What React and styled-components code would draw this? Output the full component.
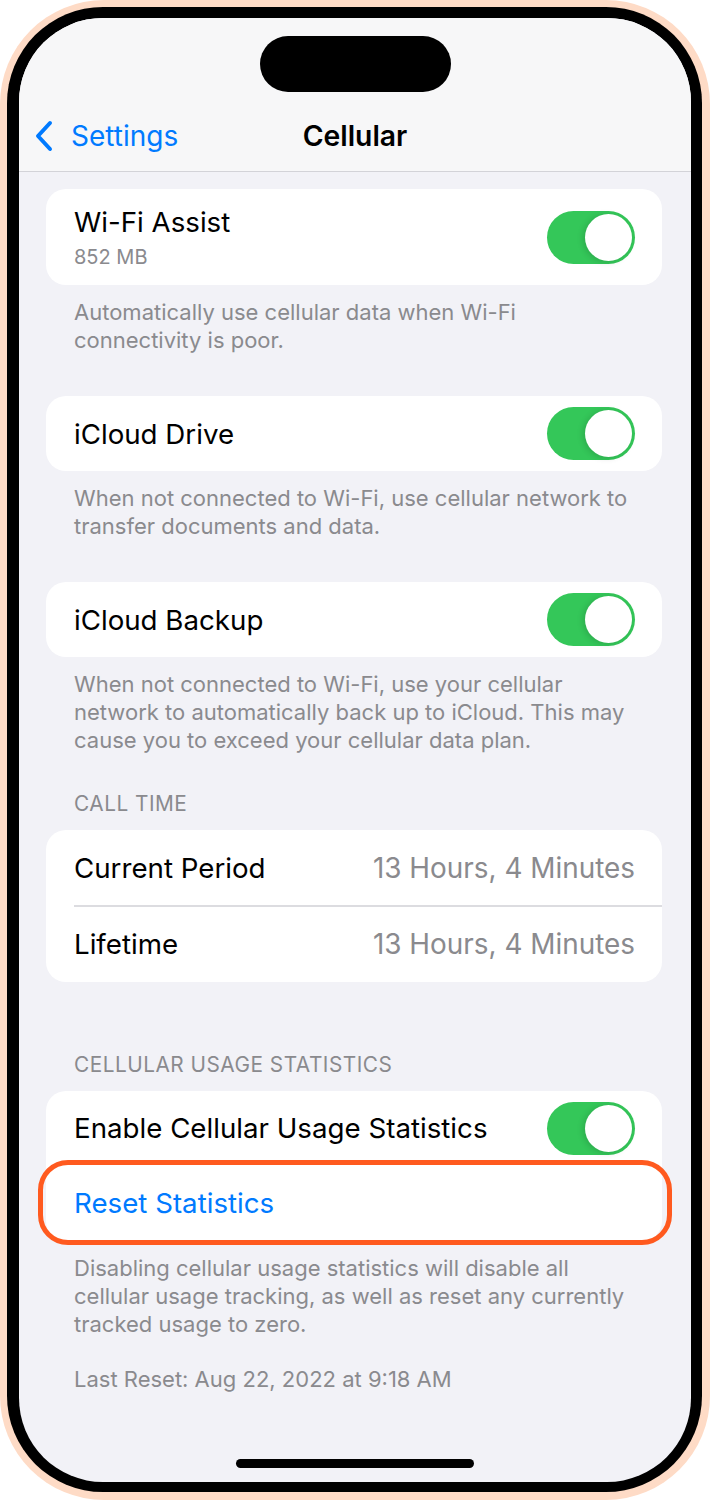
import React from "react";
import styled, { createGlobalStyle } from "styled-components";

const GlobalStyle = createGlobalStyle`
  html, body {
    margin: 0;
    padding: 0;
    background: #ffffff;
  }
  body {
    font-family: Inter, "Noto Sans", "Liberation Sans", sans-serif;
    -webkit-font-smoothing: antialiased;
  }
`;

const Toggle = ({ on = true }) => (
  <Track $on={on}>
    <Knob />
  </Track>
);

/* Cellular settings screen inside a phone frame */
const App = () => {
  return (
    <>
      <GlobalStyle />
      <Phone>
        <Bezel>
          <Screen>
            <NavBar>
              <Island />
              <NavRow>
                <BackButton>
                  <svg width="20" height="32" viewBox="0 0 20 32" fill="none">
                    <path
                      d="M16 3 L4 16 L16 29"
                      stroke="#007AFF"
                      strokeWidth="4"
                      strokeLinecap="round"
                      strokeLinejoin="round"
                    />
                  </svg>
                  <span>Settings</span>
                </BackButton>
                <NavTitle>Cellular</NavTitle>
              </NavRow>
            </NavBar>

            <Content>
              <Card>
                <Row $tall>
                  <RowText>
                    <Label>Wi-Fi Assist</Label>
                    <SubLabel>852 MB</SubLabel>
                  </RowText>
                  <Toggle />
                </Row>
              </Card>
              <Footer>
                Automatically use cellular data when Wi-Fi
                <br />
                connectivity is poor.
              </Footer>

              <Card>
                <Row>
                  <Label>iCloud Drive</Label>
                  <Toggle />
                </Row>
              </Card>
              <Footer>
                When not connected to Wi-Fi, use cellular network to
                <br />
                transfer documents and data.
              </Footer>

              <Card>
                <Row>
                  <Label>iCloud Backup</Label>
                  <Toggle />
                </Row>
              </Card>
              <Footer>
                When not connected to Wi-Fi, use your cellular
                <br />
                network to automatically back up to iCloud. This may
                <br />
                cause you to exceed your cellular data plan.
              </Footer>

              <Header>CALL TIME</Header>
              <Card>
                <Row>
                  <Label>Current Period</Label>
                  <Value>13 Hours, 4 Minutes</Value>
                </Row>
                <Separator />
                <Row>
                  <Label>Lifetime</Label>
                  <Value>13 Hours, 4 Minutes</Value>
                </Row>
              </Card>

              <Header $spaced>CELLULAR USAGE STATISTICS</Header>
              <Card>
                <Row>
                  <Label>Enable Cellular Usage Statistics</Label>
                  <Toggle />
                </Row>
                <Row>
                  <Label $link>Reset Statistics</Label>
                  <Highlight />
                </Row>
              </Card>
              <Footer>
                Disabling cellular usage statistics will disable all
                <br />
                cellular usage tracking, as well as reset any currently
                <br />
                tracked usage to zero.
              </Footer>

              <LastReset>Last Reset: Aug 22, 2022 at 9:18 AM</LastReset>
            </Content>

            <HomeIndicator />
          </Screen>
        </Bezel>
      </Phone>
    </>
  );
};

export default App;

// #region Phone stylings
const Phone = styled.div`
  width: 710px;
  height: 1500px;
  box-sizing: border-box;
  padding: 7px 8px 8px 7px;
  background: #fedbc6;
  border-radius: 104px;
  display: flex;
`;

const Bezel = styled.div`
  flex: 1;
  display: flex;
  background: #000;
  border-radius: 96px;
  padding: 11px 11px 10px 12px;
`;

const Screen = styled.div`
  flex: 1;
  display: flex;
  flex-direction: column;
  background: #f2f2f7;
  border-radius: 84px;
  overflow: hidden;
`;

const NavBar = styled.div`
  height: 154px;
  box-sizing: border-box;
  background: #f7f7f8;
  border-bottom: 1.5px solid #d3d3d8;
  display: flex;
  flex-direction: column;
  align-items: center;
  padding-top: 18px;
`;

const Island = styled.div`
  width: 191px;
  height: 56px;
  border-radius: 28px;
  background: #000;
`;

const NavRow = styled.div`
  position: relative;
  width: 100%;
  height: 48px;
  margin-top: 20px;
  display: flex;
  align-items: center;
  justify-content: center;
`;

const BackButton = styled.div`
  position: absolute;
  left: 15px;
  top: 0;
  height: 100%;
  display: flex;
  align-items: center;
  gap: 17px;
  color: #007aff;
  font-size: 28px;
`;

const NavTitle = styled.div`
  font-size: 28.3px;
  font-weight: 600;
  color: #000;
`;
// #endregion

// #region List stylings
const Content = styled.div`
  display: flex;
  flex-direction: column;
  padding: 17px 29px 0 27px;
`;

const Card = styled.div`
  position: relative;
  background: #fff;
  border-radius: 20px;
  display: flex;
  flex-direction: column;
`;

const Row = styled.div`
  position: relative;
  height: ${(p) => (p.$tall ? "96px" : "75px")};
  box-sizing: border-box;
  padding: 0 27px 0 28px;
  display: flex;
  align-items: center;
  justify-content: space-between;
`;

const RowText = styled.div`
  display: flex;
  flex-direction: column;
  gap: 6px;
`;

const Label = styled.div`
  font-size: 27.7px;
  color: ${(p) => (p.$link ? "#007aff" : "#000")};
`;

const SubLabel = styled.div`
  font-size: 20px;
  color: #8a8a8e;
`;

const Value = styled.div`
  font-size: 27.9px;
  color: #8a8a8e;
`;

const Separator = styled.div`
  height: 1.5px;
  margin-left: 28px;
  background: #dcdce0;
`;

const Footer = styled.div`
  padding: 13px 28px 0 28px;
  margin-bottom: 42px;
  font-size: 22px;
  line-height: 28px;
  color: #8a8a8e;
`;

const Header = styled.div`
  padding: 0 28px;
  margin-top: ${(p) => (p.$spaced ? "69px" : "-6px")};
  margin-bottom: 12px;
  font-size: 20.8px;
  letter-spacing: 0.5px;
  line-height: 28px;
  color: #8a8a8e;
`;

const LastReset = styled.div`
  padding: 0 28px;
  margin-top: -15px;
  font-size: 22px;
  line-height: 28px;
  color: #8a8a8e;
`;

const Track = styled.div`
  width: 88px;
  height: 53px;
  border-radius: 27px;
  box-sizing: border-box;
  padding: 3px;
  background: ${(p) => (p.$on ? "#34c759" : "#e9e9ea")};
  display: flex;
  justify-content: ${(p) => (p.$on ? "flex-end" : "flex-start")};
`;

const Knob = styled.div`
  width: 47px;
  height: 47px;
  border-radius: 50%;
  background: #fff;
  box-shadow: -2px 1px 6px rgba(0, 0, 0, 0.15);
`;

const Highlight = styled.div`
  position: absolute;
  left: -8px;
  right: -10px;
  top: -6px;
  bottom: -4px;
  border: 5px solid #ff5a1f;
  border-radius: 30px;
  pointer-events: none;
`;

const HomeIndicator = styled.div`
  width: 238px;
  height: 9px;
  border-radius: 5px;
  background: #000;
  margin: auto auto 14px;
`;
// #endregion
